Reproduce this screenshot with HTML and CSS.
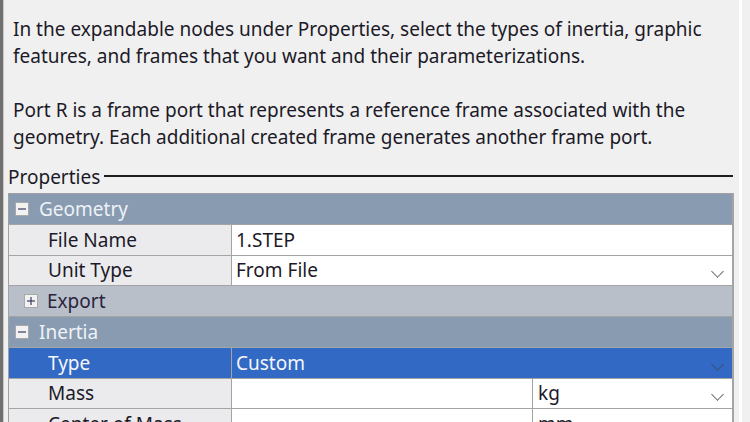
FILE: index.html
```html
<!DOCTYPE html>
<html>
<head>
<meta charset="utf-8">
<link rel="stylesheet" href="styles.css">
</head>
<body>
<div class="frame">
  <div class="edge"></div>
  <div class="panel">
    <div class="desc">
      <p>In the expandable nodes under Properties, select the types of inertia, graphic features, and frames that you want and their parameterizations.</p>
      <p>Port R is a frame port that represents a reference frame associated with the geometry. Each additional created frame generates another frame port.</p>
    </div>
    <div class="legend"><span class="legend-label">Properties</span><span class="legend-line"></span></div>
    <div class="grid">
      <div class="row group">
        <span class="box minus"></span><span class="group-label">Geometry</span>
      </div>
      <div class="row">
        <div class="name">File Name</div>
        <div class="value">1.STEP</div>
      </div>
      <div class="row">
        <div class="name">Unit Type</div>
        <div class="value">From File<span class="chev"></span></div>
      </div>
      <div class="row subgroup">
        <span class="box plus"></span><span class="sub-label">Export</span>
      </div>
      <div class="row group">
        <span class="box minus"></span><span class="group-label">Inertia</span>
      </div>
      <div class="row selected">
        <div class="name">Type</div>
        <div class="value">Custom<span class="chev"></span></div>
      </div>
      <div class="row">
        <div class="name">Mass</div>
        <div class="value split"><span class="num"></span><span class="unit">kg<span class="chev"></span></span></div>
      </div>
      <div class="row">
        <div class="name">Center of Mass</div>
        <div class="value split"><span class="num"></span><span class="unit">mm<span class="chev"></span></span></div>
      </div>
    </div>
  </div>
  <div class="side"></div>
</div>
</body>
</html>
```

FILE: styles.css
```css
* { box-sizing: border-box; }
html, body {
  margin: 0;
  padding: 0;
  background: #f0f0f0;
  overflow: hidden;
}
body {
  font-family: "Noto Sans", "Open Sans", sans-serif;
  font-size: 19px;
  color: #1c1a28;
  width: 750px;
  height: 422px;
}
.frame {
  display: flex;
  height: 422px;
}
.edge {
  width: 4px;
  flex: none;
  background: #707070;
  border-right: 1px solid #c8c8c8;
}
.panel {
  width: 735px;
  flex: none;
  padding-left: 4px;
}
.side {
  width: 3px;
  flex: none;
  background: #ffffff;
}
.desc {
  padding: 16px 0 0 5px;
  line-height: 27px;
}
.desc p {
  margin: 0 0 27px 0;
  width: 722px;
}
.desc p:last-child { margin-bottom: 0; }
.legend {
  display: flex;
  align-items: center;
  margin-top: 13px;
  height: 27px;
  line-height: 27px;
  padding-right: 6px;
}
.legend-label { padding-right: 4px; }
.legend-line {
  flex: 1;
  height: 2px;
  background: #1e1e1e;
  margin-top: -3px;
}
.grid {
  margin-top: 2px;
  width: 726px;
  border-top: 1px solid #a0a0a0;
  border-left: 1px solid #a0a0a0;
  border-right: 2px solid #a4a4a4;
}
.row {
  display: flex;
  height: 30.75px;
  border-bottom: 1px solid #a4a4a4;
  align-items: stretch;
  white-space: nowrap;
}
.name {
  width: 223px;
  flex: none;
  background: #ebebee;
  border-right: 1px solid #a4a4a4;
  padding-left: 39px;
  display: flex;
  align-items: center;
}
.value {
  flex: 1;
  background: #ffffff;
  padding-left: 4px;
  display: flex;
  align-items: center;
  position: relative;
}
.value.split { padding-left: 0; }
.num {
  width: 301px;
  height: 100%;
  border-right: 1px solid #a4a4a4;
}
.unit {
  flex: 1;
  padding-left: 5px;
  position: relative;
  height: 100%;
  display: flex;
  align-items: center;
}
.chev {
  position: absolute;
  right: 10px;
  top: 50%;
  width: 9px;
  height: 9px;
  margin-top: -3px;
  border-right: 1.3px solid #6a6a6a;
  border-bottom: 1.3px solid #6a6a6a;
  transform: rotate(45deg);
  transform-origin: center;
}
.group {
  background: #889bb0;
  color: #eef2f7;
  align-items: center;
  padding-left: 6px;
}
.subgroup {
  background: #b8bfc8;
  align-items: center;
  padding-left: 15px;
}
.group-label { padding-left: 10px; }
.sub-label { padding-left: 9px; color: #2b2440; }
.box {
  width: 14px;
  height: 14px;
  background: #f2f2f2;
  border: 1px solid #a8a8a8;
  position: relative;
  flex: none;
}
.box::before {
  content: "";
  position: absolute;
  left: 2px;
  right: 2px;
  top: 5px;
  height: 2px;
  background: #3a3a60;
  transform: scaleY(0.6);
}
.plus::after {
  content: "";
  position: absolute;
  top: 2px;
  bottom: 2px;
  left: 5px;
  width: 2px;
  background: #3a3a60;
  transform: scaleX(0.6);
}
.selected .name,
.selected .value {
  background: #3169c4;
  color: #f4f6fb;
}
.selected .chev {
  border-color: #3a4f78;
}
```
